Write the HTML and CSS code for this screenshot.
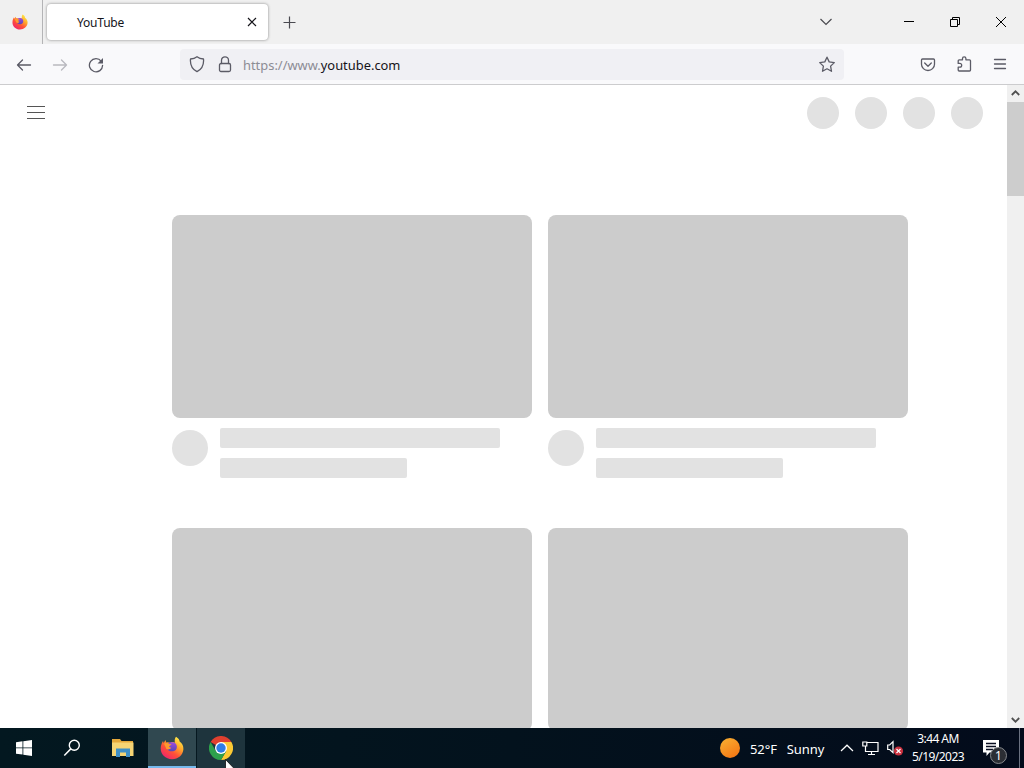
FILE: index.html
```html
<!DOCTYPE html>
<html lang="en">
<head>
<meta charset="UTF-8">
<meta name="viewport" content="width=device-width, initial-scale=1.0">
<title>YouTube</title>
<link rel="stylesheet" href="styles.css">
</head>
<body>
<!-- Shared gradients and the Firefox logo -->
<svg class="defs" width="0" height="0">
  <defs>
    <linearGradient id="fire" x1="0.85" y1="0.05" x2="0.2" y2="0.95">
      <stop offset="0" stop-color="#fff04a"/>
      <stop offset="0.35" stop-color="#ffa62b"/>
      <stop offset="0.65" stop-color="#ff5038"/>
      <stop offset="1" stop-color="#f0246c"/>
    </linearGradient>
    <linearGradient id="globe" x1="0" y1="0" x2="0" y2="1">
      <stop offset="0" stop-color="#a04adf"/>
      <stop offset="1" stop-color="#5548b8"/>
    </linearGradient>
    <linearGradient id="sun" x1="0" y1="0" x2="0.6" y2="1">
      <stop offset="0" stop-color="#f9b233"/>
      <stop offset="1" stop-color="#f47a16"/>
    </linearGradient>
    <symbol id="firefox" viewBox="0 0 24 24">
      <path fill="url(#fire)" d="M16 .8c2.600 1.500 3.400 3.200 3.600 4.700C22.200 7 23.500 10 23.400 13.200 23 19 18.200 23.200 12 23.200 5.500 23.200.7 18.500.7 12.600c0-3 1.100-5.600 2.300-7.600l.6 2L5.500 4l.8 2.500c1.600-.4 2.800-.2 4 .4 1.400-1.200 3.200-1 4.700-.2C14.300 4.700 14.800 2.300 16 .8z"/>
      <path fill="url(#globe)" d="M8.200 7.400c1.700-1.700 5.600-1.700 7.400.2 1.700 2 1.700 4.800.2 6.300-1.700 1.700-5 1.900-7.200.5-.8-.6-1.200-1.200-1.300-2 1.500.6 3 .3 4-.7-1.800-.2-3.400-.7-4-1.900z"/>
      <path fill="#ff9a2e" d="M4 7.600c1.700-1 3.800-.9 5.200.3l2.200.4c-.2 1-1.500 1.300-2.100 1.800-.4.900.3 1.600 1.700 1.900-1.200 1.400-3 1.800-4.600.9z"/>
    </symbol>
  </defs>
</svg>

<div class="desktop">
  <!-- Tab strip -->
  <div class="tabstrip">
    <div class="pinned"><svg width="16" height="16"><use href="#firefox"/></svg></div>
    <div class="tab">
      <span class="tab-title">YouTube</span>
      <svg class="tab-close" width="10" height="10" viewBox="0 0 10 10"><path d="M1 1l8 8M9 1L1 9"/></svg>
    </div>
    <svg class="new-tab" width="13" height="13" viewBox="0 0 13 13"><path d="M6.500 .5v12M.5 6.500h12"/></svg>
    <svg class="all-tabs" width="14" height="8" viewBox="0 0 14 8"><path d="M1.500 1L7 6.500 12.500 1"/></svg>
    <div class="win-btns">
      <div class="win-btn"><svg width="10" height="10" viewBox="0 0 10 10"><path d="M0 4.500h10"/></svg></div>
      <div class="win-btn"><svg width="10" height="10" viewBox="0 0 10 10"><path d="M.5 2.500h7v7h-7zM2.500 2.500v-2h7v7h-2"/></svg></div>
      <div class="win-btn"><svg width="10" height="10" viewBox="0 0 10 10"><path d="M0 0l10 10M10 0L0 10"/></svg></div>
    </div>
  </div>

  <!-- Toolbar -->
  <div class="toolbar">
    <div class="tool"><svg width="16" height="16" viewBox="0 0 16 16"><path d="M14.500 8H1.500M6.500 3L1.500 8l5 5"/></svg></div>
    <div class="tool disabled"><svg width="16" height="16" viewBox="0 0 16 16"><path d="M1.500 8h13M9.500 3l5 5-5 5"/></svg></div>
    <div class="tool"><svg width="16" height="16" viewBox="0 0 16 16"><path d="M13.300 4.300A6.600 6.600 0 1 0 14.600 8.300"/><path class="solid" d="M15 1v5.500H9.500z"/></svg></div>
    <div class="urlbar">
      <svg width="16" height="18" viewBox="0 0 16 18"><path d="M8 .7C6.300 2 3.800 2.800 1.500 3c-.5 5.500 1.200 10 6.500 12.700 5.300-2.700 7-7.200 6.500-12.700C12.200 2.800 9.700 2 8 .7z"/></svg>
      <svg class="lock" width="14" height="18" viewBox="0 0 14 18"><rect x="1.500" y="7.500" width="11" height="8" rx="1.500"/><path d="M3.500 7.500V4.300a3.500 3.500 0 0 1 7 0v3.200"/></svg>
      <span class="url">https://www.<b>youtube.com</b></span>
      <svg class="star" width="18" height="18" viewBox="0 0 18 18"><path d="M9 1.200l2.200 4.700 5.100.7-3.700 3.500.9 5.200L9 12.800l-4.500 2.500.9-5.200L1.700 6.600l5.100-.7z"/></svg>
    </div>
    <div class="tool"><svg width="16" height="16" viewBox="0 0 16 16"><path d="M2.500 2h11q1 0 1 1v4.200a6.500 6.300 0 0 1-13 0V3q0-1 1-1z"/><path d="M4.700 6L8 9.200 11.300 6"/></svg></div>
    <div class="tool"><svg width="16" height="17" viewBox="0 0 16 17"><path d="M2.200 6.500V4.800q0-1 1-1H6.500V2.500a1.700 1.700 0 0 1 3.400 0v1.300h3.600q1 0 1 1v9.200q0 1-1 1H3.200q-1 0-1-1v-2.800h1.600a1.900 1.900 0 0 0 0-3.800H2.200z"/></svg></div>
    <div class="tool"><svg width="16" height="16" viewBox="0 0 16 16"><path d="M2.500 2.500h11M2.500 7h11M2.500 11.500h11"/></svg></div>
  </div>

  <!-- Page -->
  <div class="viewport">
    <main class="page">
      <header class="masthead">
        <svg class="guide" width="18" height="14" viewBox="0 0 18 14"><path d="M0 .5h18M0 6.500h18M0 12.500h18"/></svg>
        <div class="mast-btns">
          <i class="dot"></i><i class="dot"></i><i class="dot"></i><i class="dot"></i>
        </div>
      </header>
      <div class="video-grid">
        <div class="video">
          <div class="thumb"></div>
          <div class="details">
            <div class="avatar"></div>
            <div class="lines"><div class="line"></div><div class="line short"></div></div>
          </div>
        </div>
        <div class="video">
          <div class="thumb"></div>
          <div class="details">
            <div class="avatar"></div>
            <div class="lines"><div class="line"></div><div class="line short"></div></div>
          </div>
        </div>
        <div class="video"><div class="thumb"></div></div>
        <div class="video"><div class="thumb"></div></div>
      </div>
    </main>
    <div class="scrollbar">
      <div class="arrow up"><svg width="9" height="6" viewBox="0 0 9 6"><path d="M.8 5L4.500 1.300 8.200 5"/></svg></div>
      <div class="scroll-thumb"></div>
      <div class="arrow down"><svg width="9" height="6" viewBox="0 0 9 6"><path d="M.8 1l3.700 3.700L8.200 1"/></svg></div>
    </div>
  </div>

  <!-- Taskbar -->
  <div class="taskbar">
    <div class="task"><svg width="16" height="16" viewBox="0 0 16 16"><path fill="#fff" d="M0 2.200L6.500 1.300v6.200H0zM7.300 1.200L16 0v7.500H7.300zM0 8.300h6.500v6.200L0 13.700zM7.300 8.300H16V16l-8.700-1.200z"/></svg></div>
    <div class="task"><svg width="18" height="18" viewBox="0 0 18 18"><circle cx="11.300" cy="6.300" r="5" fill="none" stroke="#fff" stroke-width="1.400"/><path d="M7.800 9.900L1.300 16.500" stroke="#fff" stroke-width="1.500"/></svg></div>
    <div class="task explorer"><svg width="22" height="18" viewBox="0 0 22 18">
      <path fill="#e5a83b" d="M0 0h8l1.500 2H21v3H0z"/>
      <path fill="#f6d474" d="M0 3.500h21.500V17H0z"/>
      <path fill="#3f8fc6" d="M4 9.500h14V18h-4v-4.500H8V18H4z"/>
    </svg></div>
    <div class="task active"><svg width="24" height="24"><use href="#firefox"/></svg></div>
    <div class="task hover"><svg width="24" height="24" viewBox="0 0 24 24">
      <path fill="#e0402f" d="M12 12L1.600 6A12 12 0 0 1 22.400 6z"/>
      <path fill="#fcc934" d="M12 12V6h10.400A12 12 0 0 1 12 24l5.200-9z"/>
      <path fill="#2da14c" d="M12 12l5.200 3L12 24A12 12 0 0 1 1.600 6l5.200 9z"/>
      <circle cx="12" cy="12" r="6" fill="#fff"/>
      <circle cx="12" cy="12" r="4.700" fill="#2f7de6"/>
    </svg></div>

    <div class="weather">
      <svg width="20" height="20" viewBox="0 0 20 20"><circle cx="10" cy="10" r="10" fill="url(#sun)"/></svg>
      <span>52°F</span><span>Sunny</span>
    </div>
    <div class="tray">
      <svg width="14" height="8" viewBox="0 0 14 8"><path d="M1 7l6-5.800L13 7"/></svg>
      <svg width="17" height="15" viewBox="0 0 17 15"><path d="M5 1.500h11v9H3.500V5M9.500 10.500v3M6 13.500h7M.8 1h4v4H.8z"/></svg>
      <svg width="17" height="16" viewBox="0 0 17 16"><path d="M.7 5h2L6 1.700v11L2.700 9.500h-2z"/><circle cx="11.500" cy="11" r="4.600" fill="#c9303e" stroke="none"/><path d="M9.500 9l4 4M13.500 9l-4 4"/></svg>
    </div>
    <div class="clock"><div>3:44 AM</div><div>5/19/2023</div></div>
    <div class="notify">
      <svg width="17" height="16" viewBox="0 0 17 16"><path fill="#fff" d="M0 0h16v12.500H6.500L3.500 16v-3.500H0z"/><path stroke="#0a0f22" stroke-width="1.300" d="M3 3.500h10M3 6.500h10M3 9.500h7"/></svg>
      <span class="count">1</span>
    </div>
    <div class="show-desktop"></div>
  </div>
  <svg class="cursor" width="12" height="19" viewBox="0 0 12 19"><path fill="#fff" stroke="#111" stroke-width=".8" d="M.5.500v16l3.700-3.500 2.500 5.500 2.300-1-2.400-5.500h5z"/></svg>
</div>
</body>
</html>
```
FILE: styles.css
```css
:root {
  --chrome:#f0f0f0;
  --toolbar:#f9f9fb;
  --icon:#5b5b66;
  --skeleton:#e2e2e2;
  --thumb:#cccccc;
}

* {box-sizing:border-box;}

html, body {
  margin:0; padding:0;
  height:100%;
  overflow:hidden;
  font-family:"Noto Sans", "Open Sans", sans-serif;
  font-size:12px;
}

svg {display:block; flex:none;}
.defs {position:absolute;}

.desktop {
  position:relative;
  width:1024px; height:768px;
  display:flex; flex-direction:column;
  overflow:hidden;
}

/* Tab strip */
.tabstrip {height:44px; display:flex; align-items:center; background:var(--chrome);}
.tabstrip path {fill:none; stroke:#4a4a50; stroke-width:1.2;}
.pinned {
  width:43px; height:44px;
  padding:14px 0 0 12px;
  border-right:1px solid #b4b4b6;
}
.tab {
  width:221px; height:36px;
  margin-left:4px;
  padding:0 11px 0 30px;
  display:flex; align-items:center; justify-content:space-between;
  background:#fff;
  border-radius:4px;
  box-shadow:0 0 3px rgba(0,0,0,0.45);
}
.tab-title {color:#15141a; font-size:12px; letter-spacing:-0.2px;}
.tabstrip .tab-close path {stroke:#15141a;}
.new-tab {margin-left:15px;}
.all-tabs {margin-left:auto;}
.win-btns {display:flex; margin-left:53px;}
.win-btn {width:46px; height:44px; display:flex; align-items:center; justify-content:center;}
.tabstrip .win-btn path {stroke:#000; stroke-width:1;}

/* Toolbar */
.toolbar {
  height:41px;
  padding:1px 6px 0;
  display:flex; align-items:center;
  background:var(--toolbar);
  border-bottom:1px solid #ccccce;
}
.toolbar path, .toolbar rect {fill:none; stroke:var(--icon); stroke-width:1.3; stroke-linejoin:round; stroke-linecap:round;}
.toolbar .solid {fill:var(--icon); stroke:none;}
.tool {width:36px; height:36px; display:flex; align-items:center; justify-content:center;}
.disabled {opacity:0.4;}
.urlbar {
  width:664px; height:31px;
  margin:0 66px;
  padding:0 8px 0 9px;
  display:flex; align-items:center;
  background:#f0f0f4;
  border-radius:4px;
}
.lock {margin-left:13px;}
.url {margin-left:11px; color:#8c8c94; font-size:12.9px;}
.url b {font-weight:400; color:#15141a;}
.star {margin-left:auto;}

/* Page skeleton */
.viewport {flex:1; min-height:0; display:flex; background:#fff;}
.page {flex:1; overflow:hidden;}
.masthead {height:56px; padding:0 24px 0 27px; display:flex; align-items:center; justify-content:space-between;}
.guide path {fill:none; stroke:#555;}
.mast-btns {display:flex; gap:16px;}
.dot {width:32px; height:32px; border-radius:50%; background:var(--skeleton);}
.video-grid {
  display:grid;
  grid-template-columns:360px 360px;
  column-gap:16px;
  padding:74px 0 0 172px;
}
.video {height:313px;}
.thumb {height:203px; border-radius:8px; background:var(--thumb);}
.details {display:flex; gap:12px; padding-top:10px;}
.avatar {width:36px; height:36px; margin-top:2px; border-radius:50%; background:var(--skeleton);}
.line {width:280px; height:20px; margin-bottom:10px; border-radius:2px; background:var(--skeleton);}
.line.short {width:187px;}

/* Scrollbar */
.scrollbar {width:17px; display:flex; flex-direction:column; background:#f0f0f0;}
.arrow {height:17px; display:flex; align-items:center; justify-content:center;}
.arrow path {fill:none; stroke:#505050; stroke-width:1.8;}
.up {padding-bottom:2px;}
.scroll-thumb {height:94px; background:#cdcdcd;}
.down {margin-top:auto;}

/* Taskbar */
.taskbar {height:40px; display:flex; align-items:center; background:linear-gradient(90deg,#031820,#03121d 50%,#030b1b); color:#fff;}
.task {width:48px; height:40px; display:flex; align-items:center; justify-content:center;}
.explorer {width:52px; padding-left:2px;}
.active {background:#304850; border-bottom:2px solid #76b9ed; padding-top:1px;}
.hover {width:49px; background:#1e343d; border-left:1px solid #061820;}
.weather {width:105px; margin-left:475px; display:flex; align-items:center; gap:10px; font-size:13px; letter-spacing:-0.1px; white-space:nowrap;}
.weather span {padding-top:1px;}
.tray {display:flex; align-items:center; gap:8px; margin-left:15px;}
.tray path {fill:none; stroke:#fff; stroke-width:1.2;}
.clock {width:54px; margin-left:7px; text-align:center; font-size:12px; letter-spacing:-0.55px; line-height:18px; white-space:nowrap;}
.notify {position:relative; margin-left:18px;}
.count {
  position:absolute; left:7px; top:7px;
  width:17px; height:17px;
  border:1px solid #85888c; border-radius:50%;
  background:#2b2e34;
  font-size:12px; line-height:15px; text-align:center;
}
.show-desktop {width:5px; height:40px; margin-left:auto; border-left:1px solid #6a7180;}

.cursor {position:absolute; left:225px; top:759px;}
```
